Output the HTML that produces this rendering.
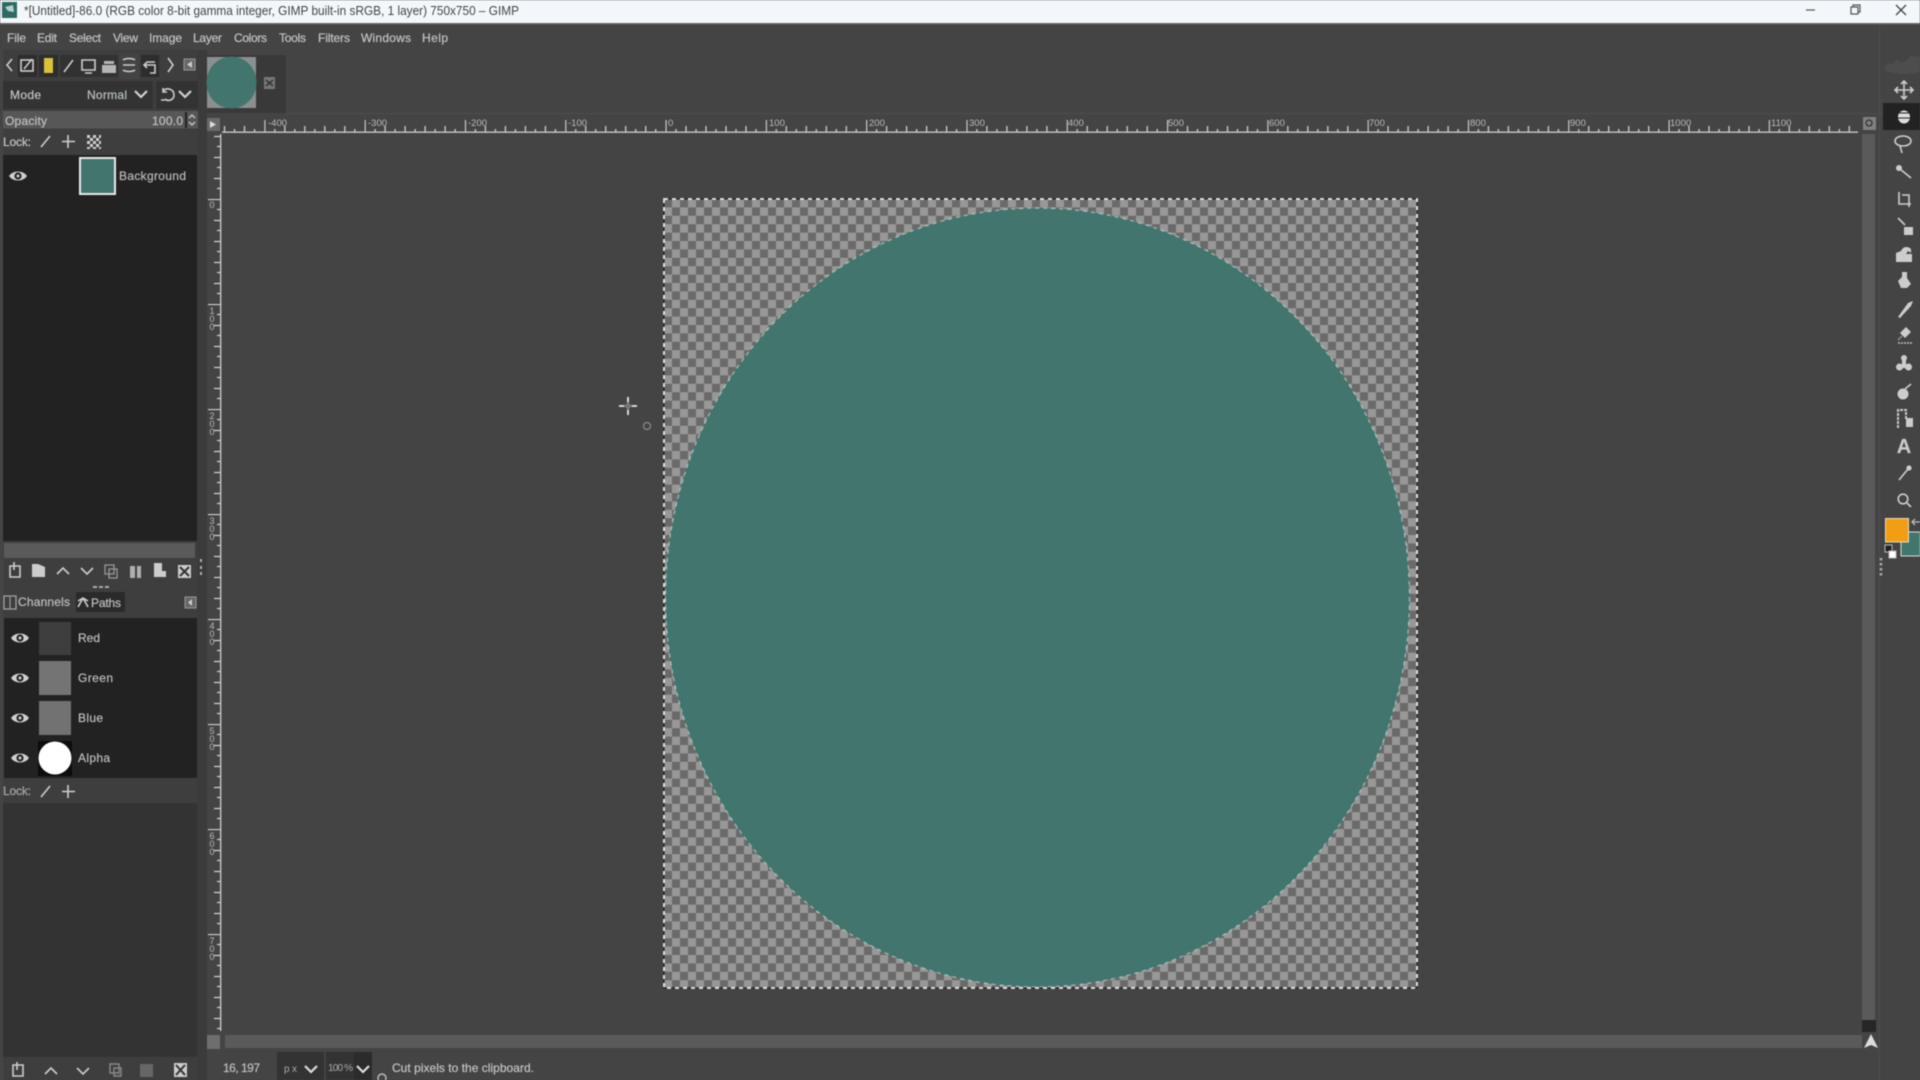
<!DOCTYPE html>
<html><head><meta charset="utf-8"><style>
html,body{margin:0;padding:0;width:1920px;height:1080px;overflow:hidden;background:#444}
svg{display:block;filter:blur(.6px)}
text{font-family:"Liberation Sans",sans-serif;fill:#c4c4c4;font-size:12px;stroke:#c4c4c4;stroke-width:.2}
.i{fill:none;stroke:#cdcdcd;stroke-width:1.6}
.f{fill:#cdcdcd}
.v{font-size:9px;writing-mode:vertical-rl;text-orientation:upright;letter-spacing:-2px;fill:#bbb;stroke:none}
.r{font-size:9.5px;fill:#bbb;stroke:none}
</style></head><body>
<svg width="1920" height="1080" viewBox="0 0 1920 1080" xmlns="http://www.w3.org/2000/svg">
<defs>
<pattern id="chk" x="664" y="199" width="16" height="16.8" patternUnits="userSpaceOnUse">
<rect width="16" height="16.8" fill="#989898"/><rect width="8" height="8.4" fill="#6a6a6a"/><rect x="8" y="8.4" width="8" height="8.4" fill="#6a6a6a"/>
</pattern>
<pattern id="lk" x="87" y="135" width="6" height="6" patternUnits="userSpaceOnUse">
<rect width="3" height="3" fill="#cfcfcf"/><rect x="3" y="3" width="3" height="3" fill="#cfcfcf"/>
</pattern>
<pattern id="hr" x="665.5" y="118" width="100.3" height="15" patternUnits="userSpaceOnUse">
<path d="M.5 2V14M10.5 11V14M20.5 8V14M30.5 11V14M40.5 8V14M50.5 11V14M60.5 8V14M70.5 11V14M80.5 8V14M90.5 11V14" stroke="#cfcfcf" stroke-width="1.3" fill="none"/>
</pattern>
<pattern id="vr" x="207" y="199" width="14" height="105" patternUnits="userSpaceOnUse">
<path d="M1 .5H14M10 10.5H14M7 21.5H14M10 31.5H14M7 42.5H14M10 52.5H14M7 63.5H14M10 73.5H14M7 84.5H14M10 94.5H14" stroke="#cfcfcf" stroke-width="1.3" fill="none"/>
</pattern>
<g id="eye"><path d="M-9 0C-5-6 5-6 9 0C5 6-5 6-9 0Z" fill="#d0d0d0"/><circle r="3.6" fill="#222"/><circle r="1.5" fill="#d0d0d0"/></g>
</defs>

<rect width="1920" height="1080" fill="#444"/>

<!-- title bar -->
<rect width="1920" height="23" fill="#f3f7fb"/>
<rect y="23" width="1920" height="1.5" fill="#666"/>
<rect x="2" y="2" width="15" height="16" fill="#2f6a62"/>
<path d="M5 7L13 5L14 12L8 11Z" fill="#b7cfcc"/>
<text x="24" y="15" style="fill:#444;stroke:none;font-size:12.5px" textLength="495" lengthAdjust="spacingAndGlyphs">*[Untitled]-86.0 (RGB color 8-bit gamma integer, GIMP built-in sRGB, 1 layer) 750x750 – GIMP</text>
<path d="M1806 10H1815" stroke="#555" stroke-width="1.2"/>
<path d="M1851 7h7v7h-7zM1853 7V5h7v7h-2" fill="none" stroke="#555" stroke-width="1.2"/>
<path d="M1896 5L1906 15M1906 5L1896 15" stroke="#444" stroke-width="1.3"/>

<!-- menu -->
<g style="font-size:12px">
<text x="7" y="42" textLength="19">File</text><text x="37" y="42" textLength="20">Edit</text><text x="69" y="42" textLength="32">Select</text><text x="113" y="42" textLength="25">View</text><text x="149" y="42" textLength="33">Image</text><text x="193" y="42" textLength="29">Layer</text><text x="234" y="42" textLength="33">Colors</text><text x="279" y="42" textLength="27">Tools</text><text x="318" y="42" textLength="32">Filters</text><text x="361" y="42" textLength="50">Windows</text><text x="422" y="42" textLength="26">Help</text>
</g>

<!-- left dock -->
<rect x="0" y="50" width="197" height="1030" fill="#3e3e3e"/>
<rect x="197" y="50" width="10" height="1030" fill="#3b3b3b"/>
<rect x="0" y="50" width="3" height="1030" fill="#454545"/>
<rect x="119" y="53" width="20" height="26" fill="#434343"/>
<rect x="18" y="55" width="19" height="22" fill="#2d2d2d"/>
<rect x="39" y="55" width="19" height="22" fill="#2d2d2d"/>
<rect x="60" y="55" width="58" height="22" fill="#323232"/>
<rect x="141" y="55" width="18" height="22" fill="#2d2d2d"/>
<!-- dock tab icons -->
<path class="i" d="M12 59L7 65L12 71" stroke-width="2.2"/>
<rect class="i" x="21" y="60" width="12" height="11" stroke="#aaa"/><path class="i" d="M24 69L32 59"/>
<rect x="44" y="58" width="9" height="15" fill="#d8c23e"/>
<path class="i" d="M64 72L73 60" stroke-width="2.6"/>
<path class="i" d="M82 60H95V70H82ZM85 73H92" stroke-width="1.8"/>
<path class="f" d="M102 65H116V73H102ZM104 61H114V64H104Z" opacity=".85"/>
<path class="i" d="M123 60C126 58 132 58 135 60M123 65H135M123 70C126 72 132 72 135 70" stroke-width="2.4"/>
<path class="i" d="M155 62H147L144 65L147 68M145 65H155V73H150" stroke="#aaa"/>
<path class="i" d="M168 58L173 65L168 72" stroke-width="2.2"/>
<rect x="184" y="59" width="11" height="11" fill="#666" stroke="#999"/><path class="f" d="M192 61V68L187 64.5Z"/>

<!-- mode -->
<rect x="3" y="81" width="150" height="28" fill="#333"/>
<rect x="156" y="81" width="42" height="28" fill="#333"/>
<text x="10" y="99" textLength="31">Mode</text>
<text x="87" y="99" textLength="40" style="fill:#b4c4bf">Normal</text>
<path d="M135 91L141 97L147 91" fill="none" stroke="#d0d0d0" stroke-width="2.2"/>
<path class="i" d="M163 91C167 87 174 89 174 95C174 100 168 102 165 99M163 88V92H167M161 100H165" stroke-width="1.8"/>
<path d="M179 91L185 97L191 91" fill="none" stroke="#d0d0d0" stroke-width="2.2"/>

<!-- opacity -->
<rect x="3" y="111" width="195" height="17.5" fill="#575757"/>
<text x="5" y="125" textLength="42" style="fill:#bdbdbd">Opacity</text>
<text x="152" y="125" textLength="31" style="fill:#bdbdbd">100.0</text>
<rect x="185" y="112" width="2" height="16" fill="#222"/>
<path d="M189 118L192 115L195 118M189 122L192 125L195 122" fill="none" stroke="#ccc" stroke-width="1.3"/>

<!-- lock -->
<text x="3" y="146" textLength="28">Lock:</text>
<path class="i" d="M41 147L50 136" stroke-width="2.4"/>
<path class="i" d="M68 135V148M62 141.5H75" stroke-width="2.4"/>
<rect x="87" y="135" width="14" height="14" fill="url(#lk)"/>

<!-- layers list -->
<rect x="3" y="155" width="194" height="386" fill="#222"/>
<use href="#eye" x="18" y="176"/>
<rect x="79" y="157" width="37" height="38" fill="#e9e9e9"/>
<rect x="81" y="159" width="33" height="34" fill="#41756e"/>
<text x="119" y="180" textLength="67" style="fill:#b5b5b5">Background</text>

<rect x="4" y="543" width="191" height="15" fill="#5a5a5a"/>
<!-- layer buttons -->
<g>
<path class="i" d="M10 566H20V577H10ZM14 562V570M10 566H18" stroke-width="1.4"/>
<path class="f" d="M32 564H38L45 567V577H32Z"/>
<path class="i" d="M57 574L63 568L69 574" stroke-width="2.2"/>
<path class="i" d="M81 568L87 574L93 568" stroke-width="2.2"/>
<path d="M105 565H114V574H105ZM109 569H117V578H109Z" fill="none" stroke="#999" stroke-width="1.3"/>
<path class="f" d="M130 566H135V578H130ZM137 566H141V578H137Z" opacity=".8"/>
<path class="f" d="M154 563H162V571H166V577H154Z"/>
<rect x="178" y="565" width="13" height="13" fill="#ccc"/><path d="M180 567L189 576M189 567L180 576" stroke="#333" stroke-width="2"/>
</g>
<path d="M201 559V562M201 566V569M201 572V575" stroke="#b0b0b0" stroke-width="2"/>
<path d="M93 587H97M99 587H103M105 587H109" stroke="#aaa" stroke-width="2"/>

<!-- channels tab -->
<rect x="4" y="596" width="12" height="13" fill="none" stroke="#aaa" stroke-width="1.2"/>
<path d="M10 597V608" stroke="#aaa"/>
<text x="18" y="606" textLength="52" style="fill:#bcbcbc">Channels</text>
<rect x="76" y="592" width="49" height="20" fill="#2a2a2a"/>
<path class="i" d="M78 601L83 598L88 601M83 598L78 607M83 598L88 607"/>
<text x="91" y="607" textLength="30" style="fill:#bcbcbc">Paths</text>
<rect x="185" y="597" width="11" height="11" fill="#666" stroke="#999"/><path class="f" d="M192 599V606L188 602.5Z"/>

<rect x="4" y="618" width="193" height="160" fill="#222"/>
<use href="#eye" x="20" y="638"/><use href="#eye" x="20" y="678"/><use href="#eye" x="20" y="718"/><use href="#eye" x="20" y="758"/>
<rect x="39" y="622" width="32" height="33" fill="#3e3e3e"/>
<rect x="39" y="661" width="32" height="34" fill="#747474"/>
<rect x="39" y="701" width="32" height="34" fill="#727272"/>
<rect x="38" y="741" width="34" height="35" fill="#0c0c0c"/>
<circle cx="55" cy="758" r="16.5" fill="#fff"/>
<text x="78" y="642" textLength="22" style="fill:#bbb">Red</text>
<text x="78" y="682" textLength="35" style="fill:#bbb">Green</text>
<text x="78" y="722" textLength="25" style="fill:#bbb">Blue</text>
<text x="78" y="762" textLength="32" style="fill:#bbb">Alpha</text>
<text x="3" y="795" textLength="28" style="fill:#999">Lock:</text>
<path class="i" d="M41 797L50 786" stroke-width="2.4"/>
<path class="i" d="M68 785V798M62 791.5H75" stroke-width="2.4"/>

<rect x="3" y="803" width="194" height="254" fill="#333"/>
<!-- bottom buttons -->
<path class="i" d="M13 1065H23V1076H13ZM17 1062V1070M13 1065H21" stroke-width="1.4"/>
<path class="i" d="M45 1074L51 1068L57 1074" stroke-width="2.2"/>
<path class="i" d="M77 1068L83 1074L89 1068" stroke-width="2.2"/>
<path d="M110 1064H119V1073H110ZM114 1068H121V1076H114Z" fill="none" stroke="#888" stroke-width="1.4"/>
<path d="M140 1064H153V1077H140Z" fill="#666"/>
<rect x="174" y="1063" width="13" height="14" fill="#ccc"/><path d="M176 1065L185 1075M185 1065L176 1075" stroke="#333" stroke-width="2"/>

<!-- image tab -->
<rect x="206" y="55" width="80" height="58" fill="#393939"/>
<rect x="207" y="57" width="49" height="51" fill="#8b8f8f"/>
<ellipse cx="231.5" cy="82.5" rx="25" ry="26" fill="#41756e"/>
<rect x="264" y="77" width="11" height="12" fill="#777"/>
<path d="M266 80L273 86M273 80L266 86" stroke="#333" stroke-width="1.5"/>
<rect x="286" y="113" width="1634" height="1" fill="#4c4c4c"/>

<!-- rulers -->
<rect x="207" y="118" width="13" height="13" fill="#6a6a6a"/>
<path d="M210 121V128L216 124.5Z" fill="#ddd"/>
<rect x="222" y="118" width="1636" height="15" fill="url(#hr)"/>
<rect x="222" y="131.5" width="1636" height="1.3" fill="#cfcfcf"/>
<rect x="207" y="135" width="14" height="896" fill="url(#vr)"/>
<rect x="220" y="134" width="1.3" height="897" fill="#cfcfcf"/>
<g>
<text class="r" x="268" y="126">-400</text><text class="r" x="368" y="126">-300</text><text class="r" x="468" y="126">-200</text><text class="r" x="568" y="126">-100</text><text class="r" x="668" y="126">0</text><text class="r" x="769" y="126">100</text><text class="r" x="869" y="126">200</text><text class="r" x="969" y="126">300</text><text class="r" x="1068" y="126">400</text><text class="r" x="1168" y="126">500</text><text class="r" x="1269" y="126">600</text><text class="r" x="1369" y="126">700</text><text class="r" x="1470" y="126">800</text><text class="r" x="1570" y="126">900</text><text class="r" x="1670" y="126">1000</text><text class="r" x="1771" y="126">1100</text>
</g>
<text class="v" x="212" y="200">0</text><text class="v" x="212" y="306">100</text><text class="v" x="212" y="411">200</text><text class="v" x="212" y="516">300</text><text class="v" x="212" y="621">400</text><text class="v" x="212" y="726">500</text><text class="v" x="212" y="831">600</text><text class="v" x="212" y="936">700</text>

<!-- canvas -->
<rect x="664" y="199" width="753" height="789" fill="url(#chk)"/>
<ellipse cx="1037.5" cy="597.5" rx="372" ry="389.5" fill="#41756e"/>
<ellipse cx="1037.5" cy="597.5" rx="372" ry="389.5" fill="none" stroke="#cfe0dc" stroke-width="1.4" stroke-dasharray="4 4" opacity=".6"/>
<rect x="664" y="199" width="753" height="789" fill="none" stroke="#262626" stroke-width="1.3"/>
<rect x="664" y="199" width="753" height="789" fill="none" stroke="#ececec" stroke-width="1.8" stroke-dasharray="4 4"/>

<!-- cursor -->
<path d="M628 397V415M619 406H637" stroke="#e8e8e8" stroke-width="1.8"/>
<path d="M624 406H632M628 402V410" stroke="#555" stroke-width="1"/>
<circle cx="647" cy="426" r="3.5" fill="none" stroke="#999" stroke-width="1"/>

<!-- scrollbars -->
<rect x="1862" y="134" width="13" height="886" fill="#5a5a5a"/>
<rect x="1862" y="1020" width="14" height="12" fill="#262626"/>
<rect x="225" y="1035" width="1637" height="13" fill="#5a5a5a"/>
<rect x="207" y="1035" width="13" height="14" fill="#6e6e6e"/>
<rect x="1863" y="117" width="13" height="13" fill="#808080"/>
<circle cx="1869" cy="123" r="3" fill="none" stroke="#333" stroke-width="1.3"/>
<path d="M1871 1034L1864 1048L1871 1045L1878 1048Z" fill="#dcdcdc"/>
<rect x="1879" y="24" width="1" height="1056" fill="#4d4d4d"/>

<!-- status -->
<text x="223" y="1072" textLength="37" style="fill:#bbb">16, 197</text>
<rect x="277" y="1052" width="47" height="28" fill="#333"/>
<rect x="326" y="1052" width="46" height="28" fill="#333"/>
<rect x="354" y="1052" width="18" height="28" fill="#2b2b2b"/>
<text x="284" y="1072" textLength="13" style="fill:#aaa;stroke:none;font-size:10px">px</text>
<path d="M305 1066L311 1072L317 1066" fill="none" stroke="#ddd" stroke-width="2.2"/>
<text x="328" y="1071" textLength="25" style="fill:#aaa;stroke:none;font-size:10px">100 %</text>
<path d="M357 1066L363 1072L369 1066" fill="none" stroke="#ddd" stroke-width="2.2"/>
<circle cx="382" cy="1078" r="4" fill="none" stroke="#bbb" stroke-width="1.5"/>
<text x="392" y="1072" textLength="142" style="fill:#c4c4c4">Cut pixels to the clipboard.</text>

<!-- toolbox -->
<path d="M1884 70C1885 64 1890 62 1893 64C1895 58 1899 59 1901 63C1905 60 1909 60 1911 55C1914 58 1917 57 1920 56V72C1908 75 1894 75 1884 70Z" fill="#4d4d4d"/>
<rect x="1883" y="103" width="37" height="27" fill="#222"/>
<path class="i" d="M1904 81V99M1895 90H1913M1901 84L1904 81L1907 84M1901 96L1904 99L1907 96M1898 87L1895 90L1898 93M1910 87L1913 90L1910 93" stroke-width="2.2"/>
<ellipse cx="1904" cy="117" rx="6" ry="6.5" fill="#ddd"/><path d="M1898 113H1910M1898 118H1910" stroke="#222" stroke-width="1"/>
<ellipse cx="1903" cy="141" rx="8" ry="5" class="i" stroke-width="2"/><path class="i" d="M1900 146L1902 153" stroke-width="2"/>
<path class="i" d="M1900 169L1911 178" stroke-width="2.4"/><circle cx="1899" cy="168" r="3" class="f"/>
<path class="i" d="M1899 192V204H1911M1902 195H1909V207" stroke-width="2.2"/>
<path class="i" d="M1898 218L1905 225" stroke-width="2"/><rect x="1904" y="227" width="9" height="8" class="f"/>
<path class="f" d="M1896 262V253L1901 251C1903 246 1908 246 1911 249V253L1908 251L1906 254H1912V262Z"/>
<path class="f" d="M1898 281L1902 277V272H1907V278L1911 284L1907 288H1901Z"/>
<path class="f" d="M1898 317L1908 303L1913 301L1911 306L1900 318Z"/>
<path class="f" d="M1900 333L1906 327L1911 332L1905 338Z"/><path d="M1898 343H1912" stroke="#bbb" stroke-dasharray="2 1" stroke-width="1.6"/><path d="M1898 340L1902 336" stroke="#aaa"/>
<circle cx="1904" cy="358" r="3" class="f"/><circle cx="1899.5" cy="367" r="3.5" class="f"/><circle cx="1908.5" cy="367" r="3.5" class="f"/><rect x="1902" y="358" width="4" height="10" class="f"/>
<circle cx="1903" cy="394" r="5.5" class="f"/><path class="i" d="M1905 389L1911 384" stroke-width="2.2"/>
<path d="M1898 428V410H1906V420" fill="none" stroke="#c9c9c9" stroke-width="2" stroke-dasharray="3 1"/>
<rect x="1906" y="418" width="7" height="9" class="f"/>
<text x="1904" y="453" text-anchor="middle" style="font-size:20px;font-weight:bold;fill:#c9c9c9">A</text>
<path class="i" d="M1899 480L1908 469" stroke-width="2"/><circle cx="1909" cy="468" r="2.6" class="f"/>
<circle cx="1903" cy="499" r="4.8" class="i" stroke-width="2"/><path class="i" d="M1907 503L1911 507" stroke-width="2.4"/>
<!-- colors -->
<rect x="1901" y="532" width="19" height="24" fill="#41756e" stroke="#ddd" stroke-width="1"/>
<rect x="1885.5" y="518.5" width="23" height="23.5" fill="#f29d13" stroke="#e9dcc0" stroke-width="1"/>
<path d="M1913 522H1920M1915 519L1912 522L1915 525" fill="none" stroke="#bbb" stroke-width="1.3"/>
<rect x="1885" y="545" width="7" height="7" fill="#222" stroke="#bbb"/>
<rect x="1889" y="551" width="7" height="7" fill="#fff" stroke="#bbb"/>
<path d="M1881 558V578" stroke="#aaa" stroke-width="2.5" stroke-dasharray="2.5 2.5"/>
</svg>
</body></html>
